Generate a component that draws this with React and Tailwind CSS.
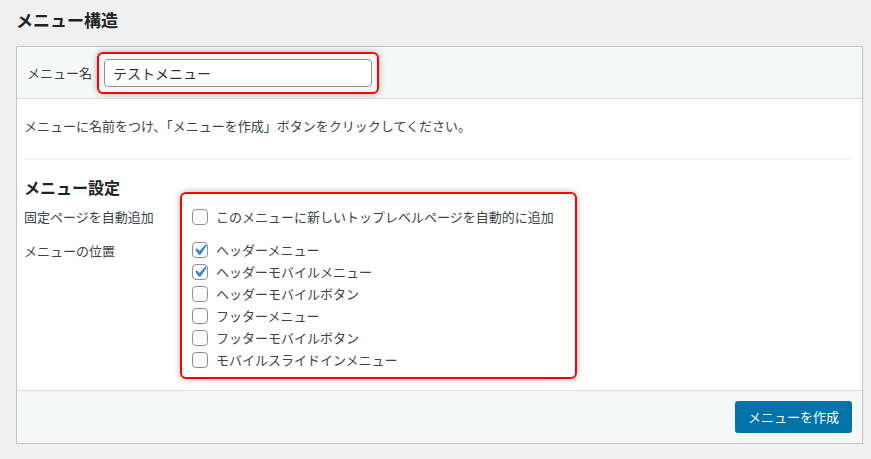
import React from 'react';

function Checkbox({ checked }) {
    return (
        <span className="relative w-4 h-4 shrink-0 rounded-[4px] border border-[#8c8f94] bg-white">
            {checked && (
                <svg viewBox="0 0 20 20" className="absolute -left-[4px] -top-[4px] w-[22px] h-[22px] max-w-none" fill="#3582c4">
                    <path d="M14.83 4.89l1.34.94-5.81 8.38H9.02L5.78 9.67l1.34-1.25 2.57 2.4z" />
                </svg>
            )}
        </span>
    );
}

function Option({ label, checked }) {
    return (
        <label className="flex items-center gap-2 h-[22px]">
            <Checkbox checked={checked} />
            <span>{label}</span>
        </label>
    );
}

const locations = [
    { label: 'ヘッダーメニュー', checked: true },
    { label: 'ヘッダーモバイルメニュー', checked: true },
    { label: 'ヘッダーモバイルボタン', checked: false },
    { label: 'フッターメニュー', checked: false },
    { label: 'フッターモバイルボタン', checked: false },
    { label: 'モバイルスライドインメニュー', checked: false },
];

export default function App() {
    return (
        <div className="w-[871px] h-[459px] bg-[#f0f0f1] px-4 text-[13px] text-[#3c434a] font-['Noto_Sans_CJK_JP','Noto_Sans',sans-serif]">
            <h2 className="pt-[8px] mb-[14px] text-[17px] leading-[24px] font-bold text-[#1d2327]">メニュー構造</h2>

            <div className="w-[847px] h-[398px] border border-[#c3c4c7] bg-white flex flex-col">
                {/* Menu name */}
                <div className="h-[52px] shrink-0 bg-[#f6f7f7] border-b border-[#dcdcde] flex items-center pl-[10px] gap-[5px]">
                    <span>メニュー名</span>
                    <div className="border-2 border-[#f00] rounded-[6px] p-[5px] shadow-[0_0_6px_rgba(0,0,0,0.3)]">
                        <input
                            defaultValue="テストメニュー"
                            className="block w-[268px] h-[28px] px-2 rounded-[4px] border border-[#8c8f94] bg-white text-[14px] text-[#2c3338] outline-none"
                        />
                    </div>
                </div>

                {/* Settings body */}
                <div className="flex-1 pl-[7px] pr-[11px] pt-[17px]">
                    <p className="leading-[20px]">メニューに名前をつけ、「メニューを作成」ボタンをクリックしてください。</p>
                    <div className="mt-[23px] border-t border-[#f0f0f1]" />
                    <h3 className="mt-[15px] text-[16px] leading-[24px] font-bold text-[#1d2327]">メニュー設定</h3>

                    <div className="mt-[7px] flex">
                        <div className="w-[168px] shrink-0">
                            <div className="h-[22px] leading-[22px]">固定ページを自動追加</div>
                            <div className="mt-[12px] h-[22px] leading-[22px]">メニューの位置</div>
                        </div>
                        <div className="relative">
                            <div className="absolute -left-[12px] -top-[14px] w-[397px] h-[187px] border-2 border-[#f00] rounded-[6px] shadow-[0_0_6px_rgba(0,0,0,0.3)] pointer-events-none" />
                            <Option label="このメニューに新しいトップレベルページを自動的に追加" checked={false} />
                            <div className="mt-[11px]">
                                {locations.map((l) => (
                                    <Option key={l.label} label={l.label} checked={l.checked} />
                                ))}
                            </div>
                        </div>
                    </div>
                </div>

                {/* Footer */}
                <div className="h-[53px] shrink-0 bg-[#f6f7f7] border-t border-[#dcdcde] flex justify-end items-start pt-[10px] pr-[10px]">
                    <button className="h-[32px] w-[117px] rounded-[3px] bg-[#0073aa] text-white text-[13px]">
                        メニューを作成
                    </button>
                </div>
            </div>
        </div>
    );
}
